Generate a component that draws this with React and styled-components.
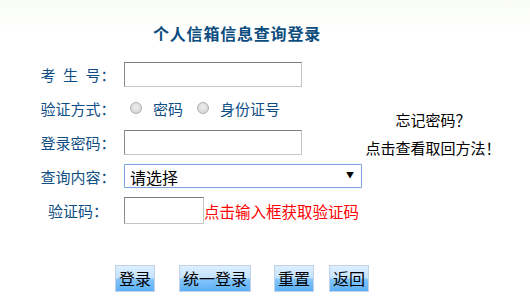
import styled, { createGlobalStyle } from 'styled-components';

const GlobalStyle = createGlobalStyle`
  html, body {
    margin: 0;
    padding: 0;
  }

  body {
    width: 530px;
    height: 300px;
    overflow: hidden;
    background: linear-gradient(#f9fcf4 0, #ffffff 30px);
    font-family: "Noto Sans CJK SC", "Liberation Sans", sans-serif;
  }
`;

const BUTTONS = [
  { text: '登录', gap: 0 },
  { text: '统一登录', gap: 24 },
  { text: '重置', gap: 23 },
  { text: '返回', gap: 15 },
];

const App = () => (
  <Page>
    <GlobalStyle />
    <Title>个人信箱信息查询登录</Title>

    <FormGrid>
      <Label>{'考\u2002生\u2002号：'}</Label>
      <Field>
        <TextInput type="text" $width={178} />
      </Field>

      <Aside>
        <AsideLine>忘记密码？</AsideLine>
        <AsideLine>点击查看取回方法！</AsideLine>
      </Aside>

      <Label>验证方式：</Label>
      <Field>
        <RadioGroup>
          <RadioOption>
            <Radio type="radio" name="auth" />
            <span>密码</span>
          </RadioOption>
          <RadioOption>
            <Radio type="radio" name="auth" />
            <span>身份证号</span>
          </RadioOption>
        </RadioGroup>
      </Field>

      <Label>登录密码：</Label>
      <Field>
        <TextInput type="password" $width={178} />
      </Field>

      <Label>查询内容：</Label>
      <Field>
        <SelectWrap>
          <Select defaultValue="">
            <option value="">请选择</option>
          </Select>
          <Arrow>▼</Arrow>
        </SelectWrap>
      </Field>

      <Label>验证码：</Label>
      <Field>
        <CodeInput type="text" />
        <Hint>点击输入框获取验证码</Hint>
      </Field>
    </FormGrid>

    <ButtonRow>
      {BUTTONS.map(({ text, gap }) => (
        <Button key={text} type="button" $gap={gap}>
          {text}
        </Button>
      ))}
    </ButtonRow>
  </Page>
);

export default App;

const Page = styled.div`
  display: flex;
  flex-direction: column;
  width: 530px;
  height: 300px;
`;

const Title = styled.h1`
  margin: 0;
  padding: 22px 0 0 153px;
  height: 35px;
  box-sizing: border-box;
  font-size: 16px;
  line-height: 22px;
  font-weight: bold;
  letter-spacing: 0.8px;
  color: #0b4d7e;
`;

const FormGrid = styled.div`
  display: grid;
  grid-template-columns: 80px 238px 1fr;
  grid-auto-rows: 34px;
  column-gap: 6px;
  padding: 22px 0 0 38px;
`;

const Label = styled.div`
  grid-column: 1;
  display: flex;
  align-items: center;
  justify-content: center;
  font-size: 15px;
  color: #0e4e84;
  white-space: pre;
`;

const Field = styled.div`
  grid-column: 2;
  display: flex;
  align-items: center;
`;

const TextInput = styled.input`
  box-sizing: border-box;
  width: ${({ $width }) => $width}px;
  height: 25px;
  margin: 0;
  padding: 0 4px;
  border: 1px solid #c3c6c9;
  border-top-color: #7b7e82;
  border-left-color: #8a8d90;
  background: #fff;
  font-size: 15px;
  outline: none;
`;

const CodeInput = styled(TextInput)`
  width: 80px;
  height: 27px;
`;

const Hint = styled.span`
  font-size: 15.5px;
  color: #ff0000;
  white-space: nowrap;
  margin-top: 2px;
`;

const RadioGroup = styled.div`
  display: flex;
  align-items: center;
  gap: 14px;
  padding-left: 6px;
`;

const RadioOption = styled.label`
  display: flex;
  align-items: center;
  gap: 11px;
  font-size: 15px;
  color: #0e4e84;
`;

const Radio = styled.input`
  appearance: none;
  width: 12px;
  height: 12px;
  margin: 0;
  border-radius: 50%;
  border: 1px solid #b0b0b0;
  background: radial-gradient(circle at 50% 40%, #efefef 0, #d8d8d8 70%, #c8c8c8 100%);
  box-sizing: border-box;
`;

const SelectWrap = styled.div`
  position: relative;
  width: 238px;
  height: 24px;
`;

const Select = styled.select`
  appearance: none;
  box-sizing: border-box;
  width: 100%;
  height: 100%;
  margin: 0;
  padding: 0 20px 0 5px;
  border: 1px solid #7ea6dc;
  border-radius: 1px;
  box-shadow: 0 0 1px #a9c6ee;
  background: #fff;
  font-family: "Noto Sans CJK SC", sans-serif;
  font-size: 16px;
  color: #000;
  outline: none;
`;

const Arrow = styled.span`
  position: absolute;
  right: 8px;
  top: 6px;
  font-size: 8px;
  line-height: 10px;
  color: #000;
  pointer-events: none;
`;

const Aside = styled.div`
  grid-column: 3;
  grid-row: 2 / span 2;
  align-self: start;
  justify-self: start;
  width: 140px;
  margin-left: -5px;
  padding-top: 15px;
  text-align: center;
`;

const AsideLine = styled.div`
  font-size: 15px;
  line-height: 28px;
  color: #000;
  white-space: nowrap;
`;

const ButtonRow = styled.div`
  display: flex;
  align-items: center;
  padding: 38px 0 0 115px;
`;

const Button = styled.button`
  height: 27px;
  margin: 0 0 0 ${({ $gap }) => $gap}px;
  padding: 0 3px;
  border: 1px solid #c3d1e6;
  background: linear-gradient(#dcefff 0, #c4e2fd 48%, #86c6fb 52%, #5bb0f6 100%);
  font-family: "Noto Sans CJK SC", sans-serif;
  font-size: 16px;
  line-height: 25px;
  color: #000;
  cursor: pointer;
`;
